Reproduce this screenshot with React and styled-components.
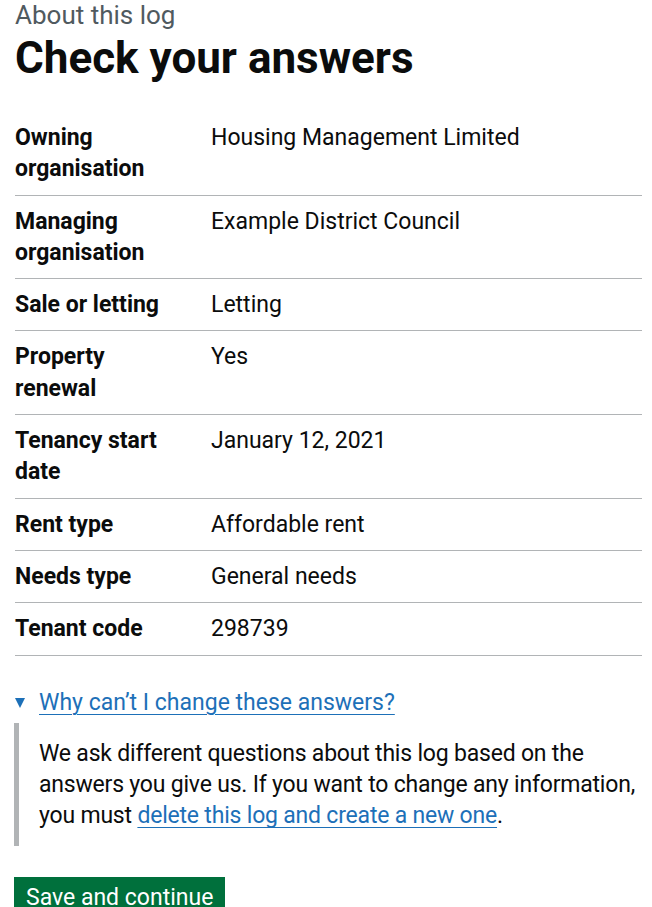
import React from 'react';
import styled, {createGlobalStyle} from 'styled-components';

const Global = createGlobalStyle`
	body {
		margin: 0;
		background: #ffffff;
		font-family: Roboto, "Liberation Sans", sans-serif;
		color: #0b0c0c;
	}
`;

const Page = styled.main`
	padding: 0 10px 40px 15px;
`;

const Caption = styled.span`
	display: block;
	font-size: 26px;
	line-height: 30px;
	color: #505a5f;
`;

const Heading = styled.h1`
	margin: 3px 0 29px 0;
	font-size: 44px;
	line-height: 50px;
	font-weight: 700;
`;

const SummaryList = styled.dl`
	margin: 0;
`;

const Row = styled.div`
	display: grid;
	grid-template-columns: 196px 1fr;
	border-bottom: 1px solid #b1b4b6;
`;

const Key = styled.dt`
	padding: 10px 30px 10px 0;
	font-size: 23px;
	line-height: 31.3px;
	font-weight: 700;
`;

const Value = styled.dd`
	margin: 0;
	padding: 10px 20px 10px 0;
	font-size: 23px;
	line-height: 31.3px;
`;

const Details = styled.details`
	margin-top: 31px;
	font-size: 23px;
	line-height: 31.3px;
`;

const Summary = styled.summary`
	display: flex;
	align-items: center;
	gap: 14px;
	list-style: none;
	cursor: pointer;
	color: #1d70b8;
	&::-webkit-details-marker {
		display: none;
	}
`;

const Arrow = styled.span`
	width: 0;
	height: 0;
	margin-top: 2px;
	border-left: 5px solid transparent;
	border-right: 5px solid transparent;
	border-top: 10px solid #1d70b8;
`;

const SummaryText = styled.span`
	text-decoration: underline;
	text-decoration-thickness: 1px;
	text-underline-offset: 4px;
`;

const DetailsText = styled.div`
	margin-top: 5px;
	margin-left: -1px;
	padding: 15px 0 14px 20px;
	border-left: 5px solid #b1b4b6;
	letter-spacing: -0.2px;
`;

const Link = styled.a`
	color: #1d70b8;
	text-decoration: underline;
	text-decoration-thickness: 1px;
	text-underline-offset: 4px;
`;

const Button = styled.button`
	margin: 31px 0 0 -1px;
	padding: 7px 12px 6px;
	border: none;
	background: #00703c;
	box-shadow: 0 2px 0 #002d18;
	color: #ffffff;
	font-family: inherit;
	font-size: 23px;
	line-height: 28px;
	cursor: pointer;
`;

const rows = [
	['Owning organisation', 'Housing Management Limited'],
	['Managing organisation', 'Example District Council'],
	['Sale or letting', 'Letting'],
	['Property renewal', 'Yes'],
	['Tenancy start date', 'January 12, 2021'],
	['Rent type', 'Affordable rent'],
	['Needs type', 'General needs'],
	['Tenant code', '298739']
];

export default function App() {
	return (
		<>
			<Global />
			<Page>
				<Caption>About this log</Caption>
				<Heading>Check your answers</Heading>
				<SummaryList>
					{rows.map(([key, value]) => (
						<Row key={key}>
							<Key>{key}</Key>
							<Value>{value}</Value>
						</Row>
					))}
				</SummaryList>
				<Details open>
					<Summary>
						<Arrow />
						<SummaryText>Why can’t I change these answers?</SummaryText>
					</Summary>
					<DetailsText>
						We ask different questions about this log based on the answers you
						give us. If you want to change any information, you must{' '}
						<Link href="#">delete this log and create a new one</Link>.
					</DetailsText>
				</Details>
				<Button>Save and continue</Button>
			</Page>
		</>
	);
}
